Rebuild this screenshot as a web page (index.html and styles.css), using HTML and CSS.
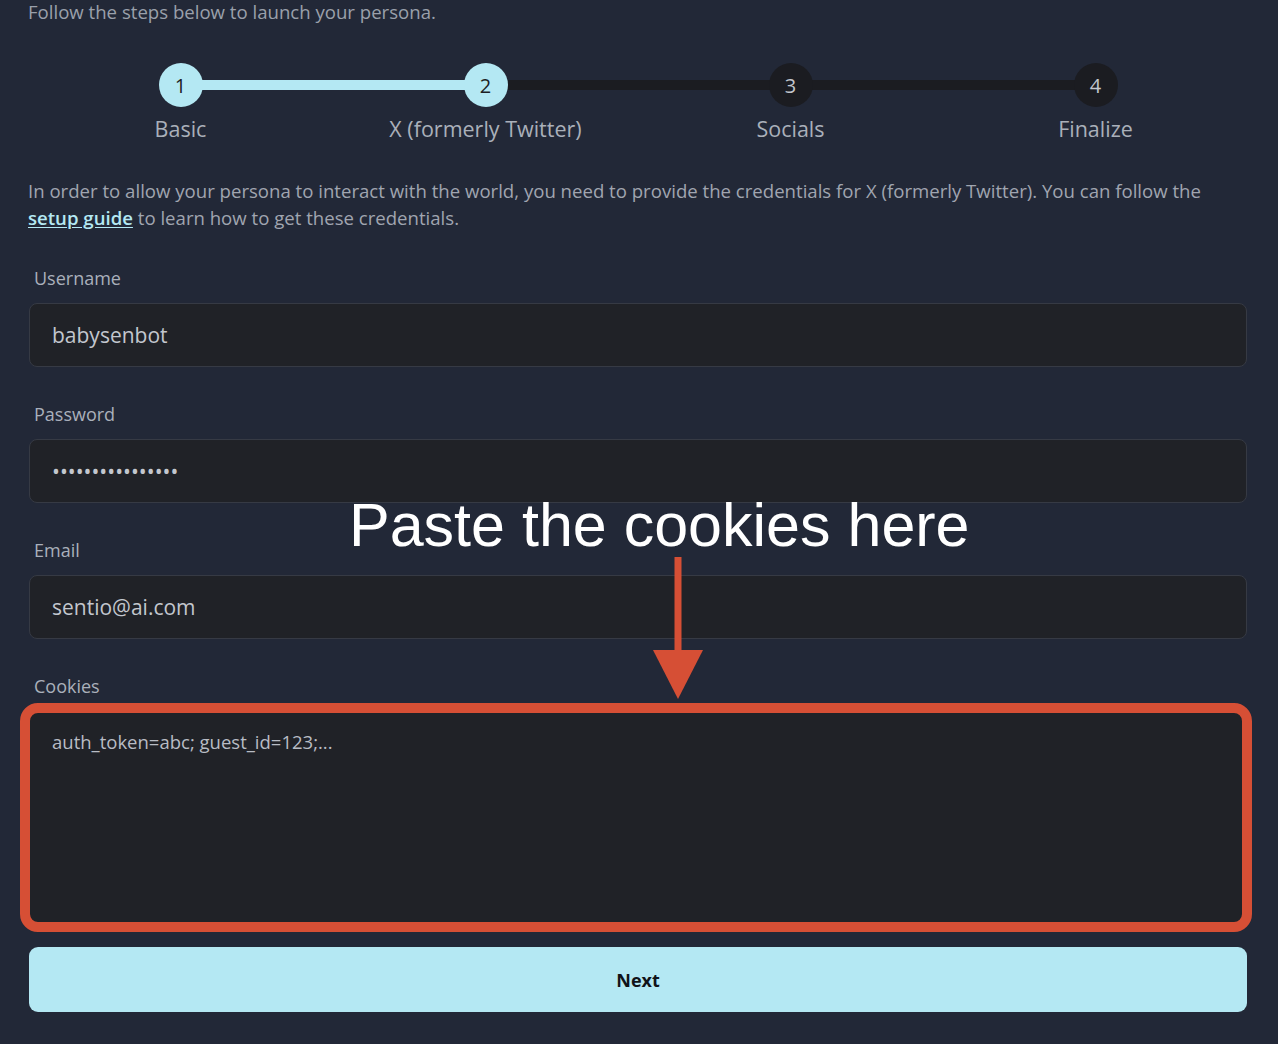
FILE: index.html
```html
<!DOCTYPE html>
<html lang="en">
<head>
<meta charset="utf-8">
<title>Launch your persona</title>
<link rel="stylesheet" href="styles.css">
</head>
<body>
<main class="page">
  <p class="intro">Follow the steps below to launch your persona.</p>

  <ol class="stepper">
    <li class="step done"><span class="dot">1</span><span class="step-label">Basic</span></li>
    <li class="step current"><span class="dot">2</span><span class="step-label">X (formerly Twitter)</span></li>
    <li class="step"><span class="dot">3</span><span class="step-label">Socials</span></li>
    <li class="step last"><span class="dot">4</span><span class="step-label">Finalize</span></li>
  </ol>

  <p class="desc">In order to allow your persona to interact with the world, you need to provide the credentials for X (formerly Twitter). You can follow the <a class="link" href="#">setup guide</a> to learn how to get these credentials.</p>

  <form class="form">
    <label class="field">
      <span class="label">Username</span>
      <input class="input" type="text" value="babysenbot">
    </label>
    <label class="field">
      <span class="label">Password</span>
      <input class="input pw" type="password" value="abcdefghijklmnop">
    </label>
    <label class="field">
      <span class="label">Email</span>
      <input class="input" type="text" value="sentio@ai.com">
    </label>
    <label class="field">
      <span class="label">Cookies</span>
      <span class="area-wrap">
        <textarea class="textarea">auth_token=abc; guest_id=123;...</textarea>
        <span class="highlight"></span>
      </span>
    </label>
    <button class="next" type="button">Next</button>
  </form>

  <div class="callout">Paste the cookies here</div>
  <svg class="arrow" width="56" height="146" viewBox="0 0 56 146" aria-hidden="true">
    <rect x="24.5" y="2" width="7" height="96" fill="#d64f35"/>
    <polygon points="3,95 53,95 28,144" fill="#d64f35"/>
  </svg>
</main>
</body>
</html>
```

FILE: styles.css
```css
* { box-sizing: border-box; }

html, body {
  margin: 0;
  padding: 0;
  background: #222837;
}

body {
  font-family: "Open Sans", Lato, sans-serif;
  color: #a3a8b3;
}

.page {
  position: relative;
  margin: 0 30px 0 28px;
}

.intro {
  margin: 0;
  font-size: 18.6px;
  line-height: 24px;
  color: #9aa0ab;
}

.stepper {
  list-style: none;
  margin: 39px 0 0 0;
  padding: 0;
  display: grid;
  grid-template-columns: repeat(4, 1fr);
}

.step {
  position: relative;
  display: flex;
  flex-direction: column;
  align-items: center;
}

.step::after {
  content: "";
  position: absolute;
  top: 17px;
  left: 50%;
  width: 100%;
  height: 10px;
  background: #1b1c21;
  z-index: 0;
}

.step.done::after { background: #b4e8f3; }
.step.last::after { display: none; }

.dot {
  position: relative;
  z-index: 1;
  width: 44px;
  height: 44px;
  border-radius: 50%;
  background: #1b1c21;
  color: #c3c7ce;
  font-size: 20px;
  display: flex;
  align-items: center;
  justify-content: center;
}

.step.done .dot,
.step.current .dot {
  background: #b4e8f3;
  color: #1d1f24;
}

.step-label {
  margin-top: 8px;
  font-size: 21.5px;
  line-height: 28px;
  color: #aab0ba;
}

.desc {
  margin: 34px 0 0 0;
  font-size: 18.6px;
  line-height: 27px;
  color: #a0a5b0;
}

.link {
  color: #b4e8f3;
  font-weight: 600;
  text-decoration: underline;
  text-underline-offset: 2px;
}

.form {
  margin-top: 35px;
  display: flex;
  flex-direction: column;
}

.field {
  display: flex;
  flex-direction: column;
  margin-bottom: 35px;
}

.label {
  padding-left: 6px;
  font-size: 18px;
  line-height: 24px;
  color: #aab0bb;
  margin-bottom: 13px;
}

.input {
  display: block;
  width: calc(100% - 2px);
  margin-left: 1px;
  height: 64px;
  padding: 0 22px;
  background: #202227;
  border: 1px solid #363a44;
  border-radius: 8px;
  font-family: "Open Sans", Lato, sans-serif;
  font-size: 21px;
  color: #c3c7ce;
  outline: none;
}

.input.pw {
  font-size: 21px;
  letter-spacing: 0;
}

.area-wrap {
  position: relative;
  display: block;
}

.textarea {
  display: block;
  width: calc(100% - 2px);
  margin-left: 1px;
  height: 212px;
  padding: 18px 22px;
  background: #202227;
  border: 1px solid #363a44;
  border-radius: 8px;
  font-family: "Open Sans", Lato, sans-serif;
  font-size: 18.5px;
  line-height: 24px;
  color: #b8bcc4;
  resize: none;
  outline: none;
}

.highlight {
  position: absolute;
  top: -8px;
  bottom: -9px;
  left: -8px;
  right: -4px;
  border: 10px solid #d64f35;
  border-radius: 18px;
  pointer-events: none;
}

.field:last-of-type { margin-bottom: 24px; }

.next {
  display: block;
  width: calc(100% - 2px);
  margin-left: 1px;
  height: 65px;
  border: none;
  border-radius: 9px;
  background: #b4e8f3;
  color: #111318;
  font-family: "Open Sans", Lato, sans-serif;
  font-size: 18px;
  font-weight: 700;
  cursor: pointer;
}

.callout {
  position: absolute;
  left: 321px;
  top: 495px;
  font-family: "Liberation Sans", Arial, sans-serif;
  font-size: 61px;
  line-height: 61px;
  color: #ffffff;
  white-space: nowrap;
}

.arrow {
  position: absolute;
  left: 622px;
  top: 555px;
}
```
